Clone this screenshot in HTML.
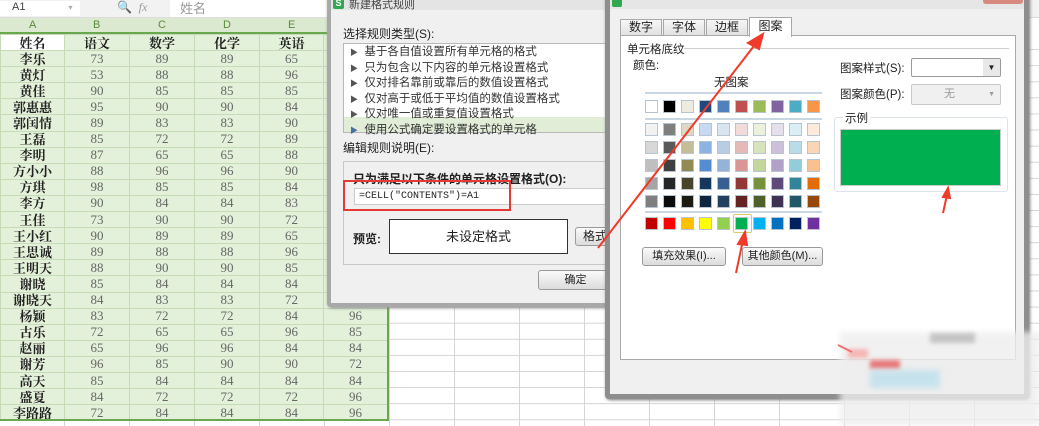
<!DOCTYPE html>
<html><head><meta charset="utf-8">
<style>
*{margin:0;padding:0;box-sizing:border-box}
body{width:1039px;height:426px;overflow:hidden;background:#fff;position:relative;font-family:"Liberation Sans","Noto Sans CJK SC",sans-serif;font-size:12px;color:#222}
.a{position:absolute}
#grid{position:absolute;left:0;top:34px;width:1039px;height:392px;
background-image:linear-gradient(to right,#d4d4d4 1px,transparent 1px),linear-gradient(to bottom,#d4d4d4 1px,transparent 1px);
background-size:65px 16.1px;background-position:-1px -1px}
table{position:absolute;left:0;top:34px;border-collapse:collapse;table-layout:fixed;background:#e4f1da}
td{height:16.1px;border:1px solid #c5dbb8;text-align:center;font-size:13px;line-height:14px;padding:0;color:#666;font-family:"Liberation Serif","Noto Serif CJK SC",serif;white-space:nowrap;overflow:hidden}
td:first-child{color:#222;font-weight:bold;font-family:"Noto Serif CJK SC",serif}
tr.h td{font-weight:bold;color:#222;font-family:"Noto Serif CJK SC",serif}
tr.h td:first-child{background:#fff}
.btn{position:absolute;border:1px solid #9a9a9a;border-radius:3px;background:linear-gradient(#fafafa,#dcdcdc);text-align:center;font-size:11px;color:#222}
.sw{position:absolute;width:13px;height:13px;border:1px solid #b8c4d0}
</style></head><body>
<div id="grid"></div>
<div class="a" style="left:0;top:0;width:1039px;height:18px;background:#f2f2f2;border-bottom:1px solid #ddd"></div>
<div class="a" style="left:0;top:1px;width:80px;height:15px;background:#fff;font-size:11px;padding-left:12px;color:#444">A1 <span style="margin-left:40px;color:#aaa;font-size:8px">▾</span></div>
<div class="a" style="left:117px;top:0;font-size:12px;color:#999">🔍&nbsp;&nbsp;<i style="font-family:'Liberation Serif',serif">fx</i></div>
<div class="a" style="left:170px;top:0;width:160px;height:17px;background:#fff;font-size:13px;color:#999;padding-left:10px;line-height:17px">姓名</div>
<div class="a" style="left:0;top:18px;width:390px;height:16px;background:#dce9d1;border-bottom:2px solid #6aa84f"></div>
<div class="a" style="left:0;top:18px;font-size:11px;color:#5a8a3a;line-height:15px">
<span class="a" style="left:29px">A</span><span class="a" style="left:93px">B</span><span class="a" style="left:158px">C</span><span class="a" style="left:223px">D</span><span class="a" style="left:288px">E</span><span class="a" style="left:353px">F</span></div>
<table>
<colgroup><col style="width:64px"><col style="width:65px"><col style="width:65px"><col style="width:65px"><col style="width:64px"><col style="width:64px"></colgroup>
<tr class="h"><td>姓名</td><td>语文</td><td>数学</td><td>化学</td><td>英语</td><td></td></tr>
<tr><td>李乐</td><td>73</td><td>89</td><td>89</td><td>65</td><td></td></tr>
<tr><td>黄灯</td><td>53</td><td>88</td><td>88</td><td>96</td><td></td></tr>
<tr><td>黄佳</td><td>90</td><td>85</td><td>85</td><td>85</td><td></td></tr>
<tr><td>郭惠惠</td><td>95</td><td>90</td><td>90</td><td>84</td><td></td></tr>
<tr><td>郭闰情</td><td>89</td><td>83</td><td>83</td><td>90</td><td></td></tr>
<tr><td>王磊</td><td>85</td><td>72</td><td>72</td><td>89</td><td></td></tr>
<tr><td>李明</td><td>87</td><td>65</td><td>65</td><td>88</td><td></td></tr>
<tr><td>方小小</td><td>88</td><td>96</td><td>96</td><td>90</td><td></td></tr>
<tr><td>方琪</td><td>98</td><td>85</td><td>85</td><td>84</td><td></td></tr>
<tr><td>李方</td><td>90</td><td>84</td><td>84</td><td>83</td><td></td></tr>
<tr><td>王佳</td><td>73</td><td>90</td><td>90</td><td>72</td><td></td></tr>
<tr><td>王小红</td><td>90</td><td>89</td><td>89</td><td>65</td><td></td></tr>
<tr><td>王思诚</td><td>89</td><td>88</td><td>88</td><td>96</td><td></td></tr>
<tr><td>王明天</td><td>88</td><td>90</td><td>90</td><td>85</td><td></td></tr>
<tr><td>谢晓</td><td>85</td><td>84</td><td>84</td><td>84</td><td></td></tr>
<tr><td>谢晓天</td><td>84</td><td>83</td><td>83</td><td>72</td><td></td></tr>
<tr><td>杨颖</td><td>83</td><td>72</td><td>72</td><td>84</td><td>96</td></tr>
<tr><td>古乐</td><td>72</td><td>65</td><td>65</td><td>96</td><td>85</td></tr>
<tr><td>赵丽</td><td>65</td><td>96</td><td>96</td><td>84</td><td>84</td></tr>
<tr><td>谢芳</td><td>96</td><td>85</td><td>90</td><td>90</td><td>72</td></tr>
<tr><td>高天</td><td>85</td><td>84</td><td>84</td><td>84</td><td>84</td></tr>
<tr><td>盛夏</td><td>84</td><td>72</td><td>72</td><td>72</td><td>96</td></tr>
<tr><td>李路路</td><td>72</td><td>84</td><td>84</td><td>84</td><td>96</td></tr>
</table>
<div class="a" style="left:0;top:419px;width:389px;height:2px;background:#6aa84f"></div>
<div class="a" style="left:387px;top:34px;width:2px;height:387px;background:#6aa84f"></div>

<div class="a" style="left:327px;top:-6px;width:290px;height:313px;background:#f0f0f0;border:4px solid #a8a8a8;border-radius:4px;box-shadow:1px 1px 3px #888"></div>
<div class="a" style="left:331px;top:-2px;width:280px;height:12px;background:#e4e4e4"></div>
<div class="a" style="left:333px;top:-2px;width:11px;height:11px;background:#2fa84f;border-radius:2px;color:#fff;font-size:9px;text-align:center;line-height:11px;font-weight:bold">S</div>
<div class="a" style="left:349px;top:-4px;font-size:11px;color:#444">新建格式规则</div>
<div class="a" style="left:343px;top:25px;font-size:12px">选择规则类型(S):</div>
<div class="a" style="left:343px;top:43px;width:270px;height:90px;background:#fff;border:1px solid #b8b8b8"></div>
<div class="a" style="left:344px;top:117px;width:268px;height:15px;background:#e2edd8"></div>
<div class="a" style="left:350px;top:45px;font-size:11.5px;line-height:14.6px;color:#333">
<div><span style="font-size:8px;color:#555">▶</span>&nbsp;&nbsp;基于各自值设置所有单元格的格式</div>
<div><span style="font-size:8px;color:#555">▶</span>&nbsp;&nbsp;只为包含以下内容的单元格设置格式</div>
<div><span style="font-size:8px;color:#555">▶</span>&nbsp;&nbsp;仅对排名靠前或靠后的数值设置格式</div>
<div><span style="font-size:8px;color:#555">▶</span>&nbsp;&nbsp;仅对高于或低于平均值的数值设置格式</div>
<div><span style="font-size:8px;color:#555">▶</span>&nbsp;&nbsp;仅对唯一值或重复值设置格式</div>
<div><span style="font-size:8px;color:#4a6fa5">▶</span>&nbsp;&nbsp;使用公式确定要设置格式的单元格</div>
</div>
<div class="a" style="left:343px;top:139px;font-size:12px">编辑规则说明(E):</div>
<div class="a" style="left:343px;top:161px;width:270px;height:104px;border:1px solid #c8c8c8;background:#f0f0f0"></div>
<div class="a" style="left:353px;top:170px;font-size:12px;font-weight:bold">只为满足以下条件的单元格设置格式(O):</div>
<div class="a" style="left:354px;top:188px;width:260px;height:17px;background:#fff;border:1px solid #ccc;font-size:10px;line-height:15px;padding-left:4px;font-family:'Liberation Mono',monospace">=CELL("CONTENTS")=A1</div>
<div class="a" style="left:343px;top:180px;width:168px;height:31px;border:2px solid #e53935"></div>
<div class="a" style="left:353px;top:230px;font-size:12px;font-weight:bold">预览:</div>
<div class="a" style="left:389px;top:219px;width:179px;height:35px;background:#fff;border:1px solid #333;text-align:center;line-height:33px;font-size:13px">未设定格式</div>
<div class="btn" style="left:575px;top:227px;width:40px;height:19px;line-height:17px;font-size:12px">格式</div>
<div class="btn" style="left:538px;top:270px;width:75px;height:20px;line-height:18px">确定</div>

<div class="a" style="left:605px;top:-6px;width:424px;height:405px;background:#f0f0f0;border:5px solid #8e8e8e;border-radius:4px;box-shadow:1px 1px 3px #777"></div>
<div class="a" style="left:610px;top:-1px;width:414px;height:10px;background:#e6e6e6"></div>
<div class="a" style="left:612px;top:-3px;width:10px;height:10px;background:#2fa84f;border-radius:2px"></div>
<div class="a" style="left:983px;top:-4px;width:40px;height:8px;background:#d98a7e;border-radius:3px"></div>
<div class="a" style="left:620px;top:35px;width:396px;height:325px;background:#fff;border:1px solid #a9a9a9"></div>
<div class="a" style="left:620px;top:19px;width:42px;height:17px;border:1px solid #a9a9a9;background:linear-gradient(#f6f6f6,#e2e2e2);text-align:center;font-size:12px;line-height:15px">数字</div>
<div class="a" style="left:663px;top:19px;width:42px;height:17px;border:1px solid #a9a9a9;background:linear-gradient(#f6f6f6,#e2e2e2);text-align:center;font-size:12px;line-height:15px">字体</div>
<div class="a" style="left:706px;top:19px;width:42px;height:17px;border:1px solid #a9a9a9;background:linear-gradient(#f6f6f6,#e2e2e2);text-align:center;font-size:12px;line-height:15px">边框</div>
<div class="a" style="left:749px;top:17px;width:43px;height:20px;border:1px solid #a9a9a9;border-bottom:none;background:#fff;text-align:center;font-size:12px;line-height:17px">图案</div>
<div class="a" style="left:627px;top:41px;font-size:11.5px">单元格底纹</div>
<div class="a" style="left:684px;top:48px;width:325px;height:1px;background:#d0d0d0"></div>
<div class="a" style="left:633px;top:57px;font-size:11.5px">颜色:</div>
<div class="a" style="left:714px;top:74px;font-size:11.5px">无图案</div>
<div class="a" style="left:645px;top:92px;width:177px;height:2px;background:#c9d6e3"></div>
<div class="a" style="left:645px;top:118px;width:177px;height:2px;background:#c9d6e3"></div>
<div class="a" style="left:645px;top:211px;width:177px;height:2px;background:#c9d6e3"></div>
<div id="sw"></div>
<div class="a" style="left:733px;top:214px;width:19px;height:19px;border:1px solid #e0c860;border-radius:2px"></div>
<div class="btn" style="left:642px;top:247px;width:84px;height:19px;line-height:17px">填充效果(I)...</div>
<div class="btn" style="left:742px;top:247px;width:81px;height:19px;line-height:17px">其他颜色(M)...</div>
<div class="a" style="left:840px;top:60px;font-size:11.5px">图案样式(S):</div>
<div class="a" style="left:911px;top:58px;width:90px;height:19px;background:#fff;border:1px solid #9a9a9a;border-radius:2px"><span class="a" style="right:0;top:0;width:17px;height:17px;background:#e8e8e8;font-size:8px;text-align:center;line-height:17px">▼</span></div>
<div class="a" style="left:840px;top:86px;font-size:11.5px">图案颜色(P):</div>
<div class="a" style="left:911px;top:84px;width:90px;height:21px;background:#f0f0f0;border:1px solid #c8c8c8;border-radius:2px;font-size:11px;color:#999;line-height:19px;padding-left:32px">无<span style="position:absolute;right:5px;font-size:7px">▼</span></div>
<div class="a" style="left:834px;top:117px;width:174px;height:75px;border:1px solid #dde3ea;border-radius:3px"></div>
<div class="a" style="left:843px;top:110px;font-size:11.5px;background:#fff;padding:0 2px">示例</div>
<div class="a" style="left:840px;top:129px;width:161px;height:57px;background:#00b050;border:1px solid #ccc"></div>

<!-- watermark blur -->
<div class="a" style="left:840px;top:332px;width:199px;height:94px;background:#eeeeee;opacity:.8;filter:blur(3px)"></div>
<div class="a" style="left:930px;top:333px;width:45px;height:10px;background:#c4c4c4;filter:blur(2px)"></div>
<div class="a" style="left:870px;top:360px;width:30px;height:9px;background:#e8787a;filter:blur(2px)"></div>
<div class="a" style="left:870px;top:370px;width:70px;height:18px;background:#c6e2ec;filter:blur(3px)"></div>
<div class="a" style="left:848px;top:349px;width:20px;height:9px;background:#f6b4b4;filter:blur(2px)"></div>

<svg class="a" style="left:0;top:0" width="1039" height="426">
<g stroke="#f03a2a" stroke-width="2" fill="#f03a2a">
<line x1="598" y1="248" x2="757" y2="42"/>
<polygon points="763,34 748,43 759,49"/>
<line x1="736" y1="273" x2="743" y2="240"/>
<polygon points="745,232 738,244 747,245"/>
<line x1="943" y1="213" x2="947" y2="195"/>
<polygon points="948,188 943,197 950,198"/>
<line x1="838" y1="345" x2="852" y2="352" stroke="#f07070"/>
</g></svg>
<script>
var c=[["#fff","#000","#eeece1","#1f497d","#4f81bd","#c0504d","#9bbb59","#8064a2","#4bacc6","#f79646"],
["#f2f2f2","#7f7f7f","#ddd9c3","#c6d9f0","#dbe5f1","#f2dcdb","#ebf1dd","#e5e0ec","#dbeef3","#fdeada"],
["#d8d8d8","#595959","#c4bd97","#8db3e2","#b8cce4","#e5b9b7","#d7e3bc","#ccc1d9","#b7dde8","#fbd5b5"],
["#bfbfbf","#3f3f3f","#938953","#548dd4","#95b3d7","#d99694","#c3d69b","#b2a2c7","#92cddc","#fac08f"],
["#a5a5a5","#262626","#494429","#17365d","#366092","#953734","#76923c","#5f497a","#31859b","#e36c09"],
["#7f7f7f","#0c0c0c","#1d1b10","#0f243e","#244061","#632423","#4f6128","#3f3151","#205867","#974806"],
["#c00000","#ff0000","#ffc000","#ffff00","#92d050","#00b050","#00b0f0","#0070c0","#002060","#7030a0"]];
var ys=[100,123,141,159,177,195,217],h="";
for(var r=0;r<7;r++)for(var i=0;i<10;i++)h+='<div class="sw" style="left:'+(645+i*18)+'px;top:'+ys[r]+'px;background:'+c[r][i]+'"></div>';
document.getElementById("sw").innerHTML=h;
</script>
</body></html>
